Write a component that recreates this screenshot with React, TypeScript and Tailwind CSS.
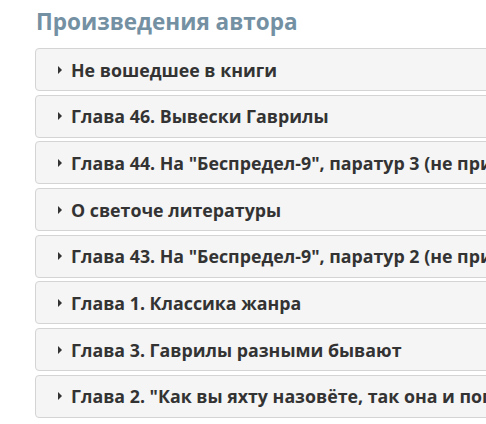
import React from "react";

const items = [
  "Не вошедшее в книги",
  "Глава 46. Вывески Гаврилы",
  'Глава 44. На "Беспредел-9", паратур 3 (не при делах)',
  "О светоче литературы",
  'Глава 43. На "Беспредел-9", паратур 2 (не при делах)',
  "Глава 1. Классика жанра",
  "Глава 3. Гаврилы разными бывают",
  'Глава 2. "Как вы яхту назовёте, так она и поплывёт"',
];

export default function App() {
  return (
    <div
      className="w-[486px] h-[424px] overflow-hidden bg-white pl-[35px]"
      style={{ fontFamily: '"Open Sans", "Noto Sans", sans-serif' }}
    >
      <h2 className="pt-[7px] pl-[1px] text-[22.5px] leading-[30px] font-bold text-[#7490a3] whitespace-nowrap">
        Произведения автора
      </h2>
      <div className="mt-[11px] flex flex-col gap-[3.7px] w-[480px]">
        {items.map((t) => (
          <div
            key={t}
            className="h-[43px] flex items-center rounded-[4px] border border-[#d4d4d4] bg-[#f5f5f5] pl-[22px] overflow-hidden"
          >
            <svg width="4" height="8" viewBox="0 0 4 8" className="mr-[9px] shrink-0">
              <path d="M0 0 L4 4 L0 8 Z" fill="#333" />
            </svg>
            <span className="text-[17.8px] leading-[24px] font-bold text-[#333333] whitespace-nowrap">{t}</span>
          </div>
        ))}
      </div>
    </div>
  );
}
